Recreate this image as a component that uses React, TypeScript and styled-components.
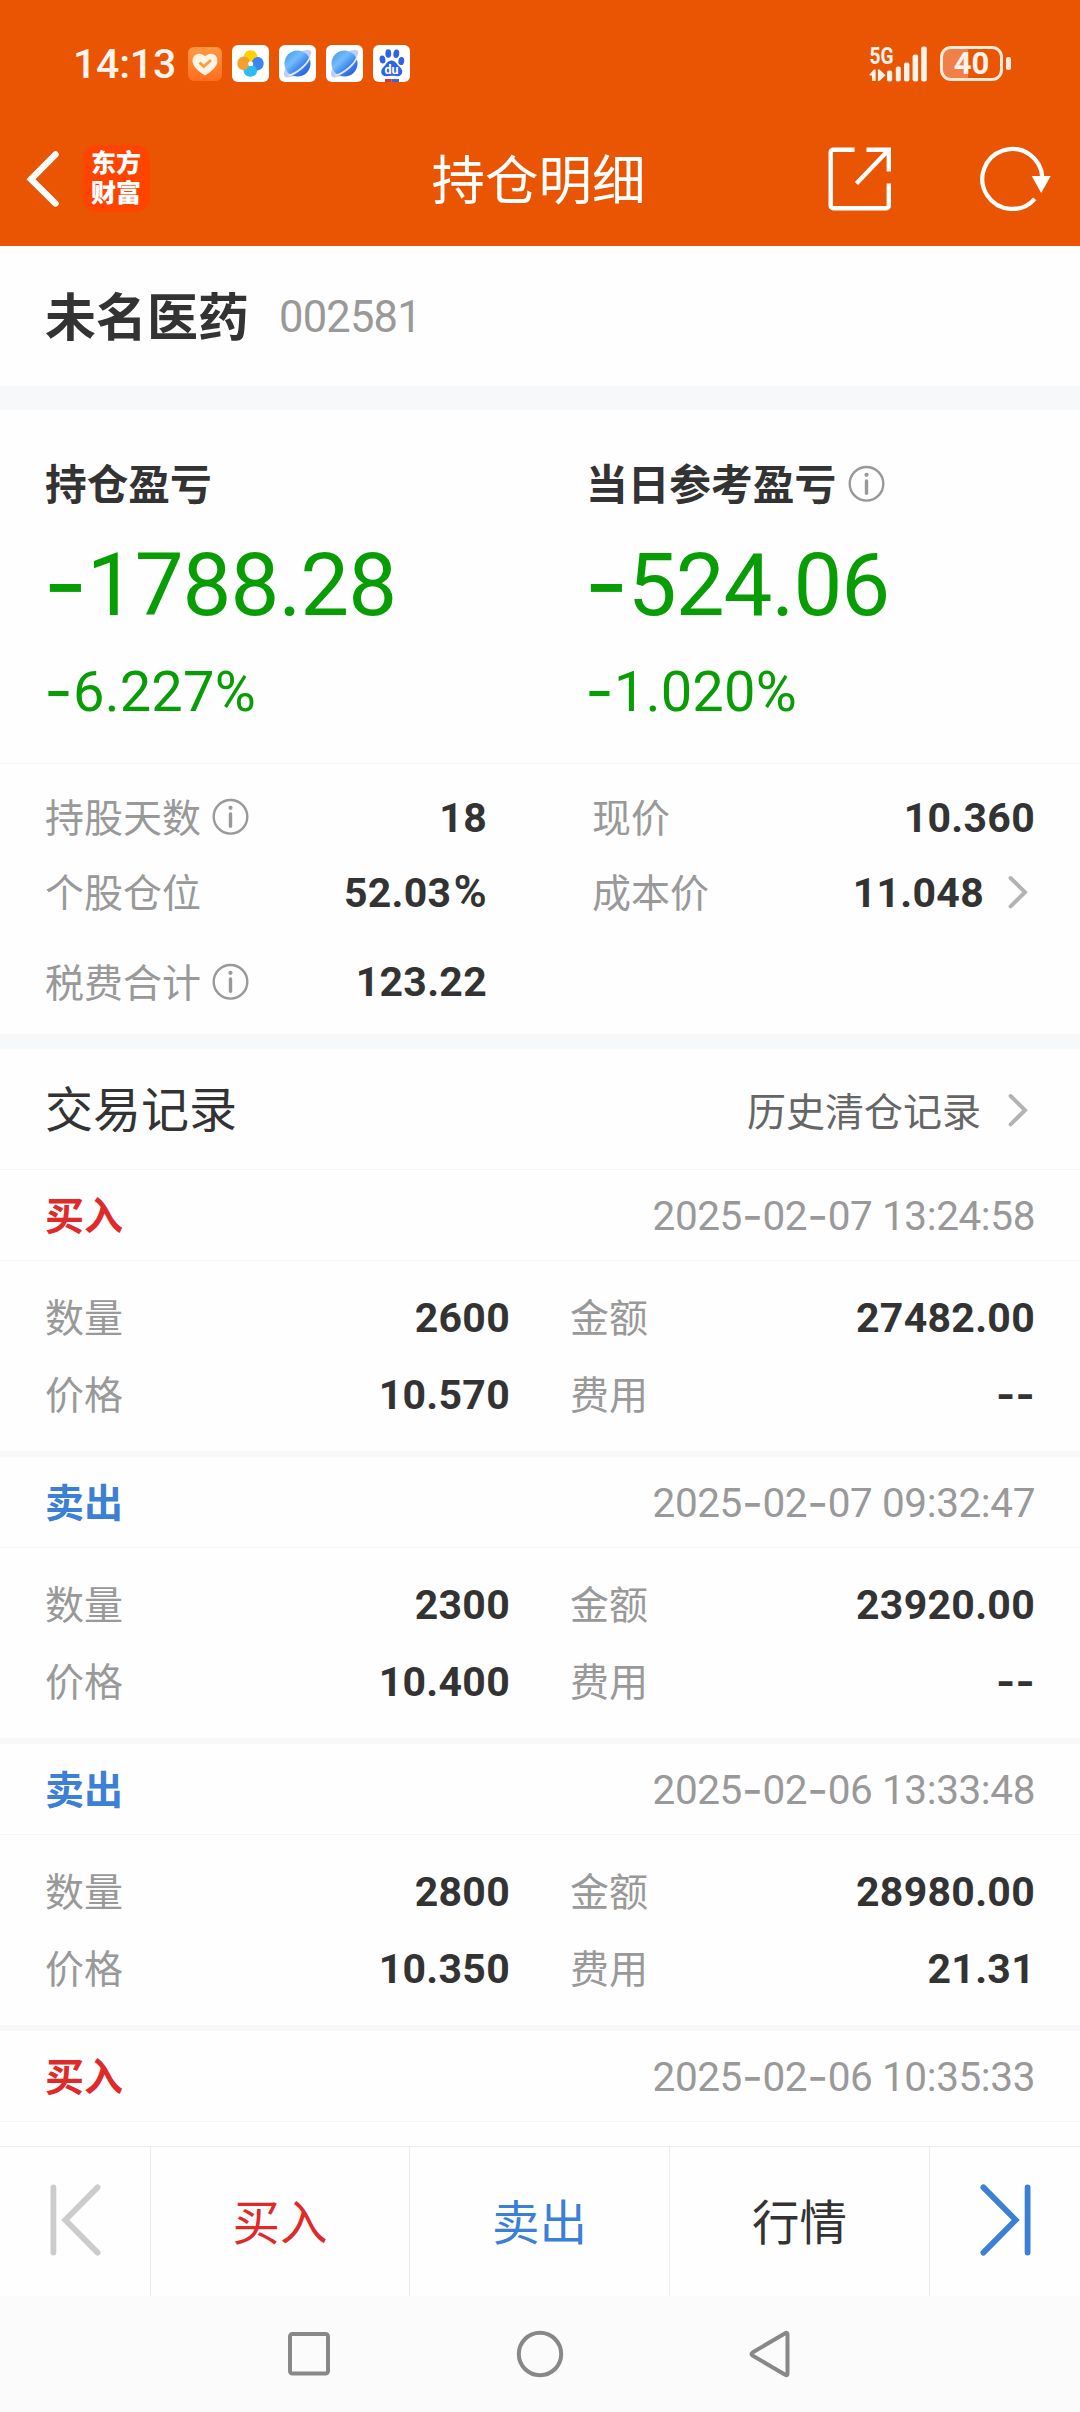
import React from "react";
import styled, { createGlobalStyle, css } from "styled-components";

const CJK = `"Noto Sans CJK SC", "Noto Sans", sans-serif`;
const DIGITS = `Roboto, "Noto Sans CJK SC", sans-serif`;

const color = {
  brand: "#ea5504",
  ink: "#333333",
  muted: "#999999",
  mid: "#666666",
  band: "#f6f8fa",
  line: "#f4f5f6",
  divider: "#ebebeb",
  down: "#089d05",
  buy: "#e02a2a",
  sell: "#3b80d6",
};

const GlobalStyle = createGlobalStyle`
  *, *::before, *::after { box-sizing: border-box; }
  html, body { margin: 0; padding: 0; background: #fff; }
  svg { display: block; flex: none; overflow: visible; }
`;

/* Ideographs sit slightly low in their line box; the bottom padding lifts them back to the centre. */
const cjkText = css`
  font-family: ${CJK};
  line-height: 1.3;
  padding-bottom: 0.11em;
  white-space: nowrap;
`;

const Screen = styled.div`
  width: 1080px;
  height: 2412px;
  display: flex;
  flex-direction: column;
  overflow: hidden;
  background: #fefefe;
  color: ${color.ink};
`;

const Header = styled.header`
  flex: none;
  height: 246px;
  background: ${color.brand};
  color: #fff;
`;

const StatusBar = styled.div`
  height: 127px;
  padding: 0 69px 0 73px;
  display: flex;
  align-items: center;
  justify-content: space-between;
`;

const StatusGroup = styled.div<{ $gap: number }>`
  display: flex;
  align-items: center;
  gap: ${(p) => p.$gap}px;
`;

const Clock = styled.span`
  width: 105px;
  font: 500 41px/44px ${DIGITS};
  letter-spacing: -0.2px;
  color: #fff4ec;
`;

const Battery = styled.div`
  display: flex;
  align-items: center;
  gap: 3px;
`;

const BatteryShell = styled.div<{ $level: number }>`
  width: 63px;
  height: 35px;
  border: 3px solid #ffeadb;
  border-radius: 11px;
  background: linear-gradient(
    to right,
    #f08048 ${(p) => p.$level}%,
    transparent ${(p) => p.$level}%
  );
  font: 700 31px/29px ${DIGITS};
  text-align: center;
  color: #fff4ec;
`;

const BatteryTip = styled.div`
  width: 5px;
  height: 13px;
  border-radius: 2px;
  background: #ffeadb;
`;

const NavBar = styled.div`
  height: 119px;
  padding: 0 29px 16px 26px;
  display: grid;
  grid-template-columns: 1fr auto 1fr;
  align-items: center;
`;

const NavLeft = styled.div`
  display: flex;
  align-items: center;
  gap: 24px;
`;

const NavRight = styled.div`
  display: flex;
  align-items: center;
  justify-content: flex-end;
  gap: 88px;
`;

const BrandBadge = styled.div`
  width: 67px;
  height: 67px;
  border-radius: 14px;
  background: #ff4400;
  padding: 1px 8px 0;
  font: 900 25px/30px ${CJK};
  word-break: break-all;
`;

const Title = styled.h1`
  ${cjkText}
  margin: 0;
  padding-bottom: 0.08em;
  font-size: 53.5px;
  font-weight: 400;
`;

const StockBar = styled.section`
  flex: none;
  height: 140px;
  padding: 1px 45px 0;
  display: flex;
  align-items: center;
  gap: 30px;
`;

const StockName = styled.h2`
  ${cjkText}
  margin: 0;
  font-size: 51px;
  font-weight: 700;
`;

const StockCode = styled.span`
  padding-top: 2px;
  font: 400 43.5px/50px ${DIGITS};
  letter-spacing: -0.8px;
  color: ${color.muted};
`;

const Band = styled.div<{ $h: number }>`
  flex: none;
  height: ${(p) => p.$h}px;
  background: ${color.band};
`;

const PnlSection = styled.section`
  flex: none;
  height: 354px;
  padding: 44px 45px 0;
  display: grid;
  grid-template-columns: 541px 1fr;
  border-bottom: 1px solid ${color.line};
`;

const PnlTitle = styled.div`
  height: 60px;
  display: flex;
  align-items: center;
  gap: 12px;
`;

const PnlLabel = styled.span`
  ${cjkText}
  font-size: 41.7px;
  font-weight: 700;
`;

const PnlAmount = styled.div`
  margin-top: 26px;
  margin-left: -2px;
  font: 400 87px/90px ${DIGITS};
  letter-spacing: -1px;
  color: ${color.down};
`;

const PnlPercent = styled.div`
  margin-top: 32px;
  margin-left: -1px;
  font: 400 56px/60px ${DIGITS};
  letter-spacing: 0.2px;
  color: ${color.down};
`;

const Stats = styled.section`
  flex: none;
  height: 270px;
  padding: 16px 45px 0;
  display: grid;
  grid-template-columns: 442px 443px;
  grid-template-rows: 75px 75px 104px;
  column-gap: 105px;
`;

const Field = styled.div`
  display: flex;
  align-items: center;
`;

const FieldLabel = styled.span`
  ${cjkText}
  font-size: 39px;
  color: ${color.muted};
`;

const FieldInfo = styled.span`
  margin-left: 11px;
`;

const FieldValue = styled.span`
  margin-left: auto;
  font: 700 41px/48px ${DIGITS};
  letter-spacing: 0.3px;
  white-space: nowrap;
`;

const PercentSign = styled.span`
  margin-left: 2px;
  font-size: 1.1em;
  font-weight: 600;
  line-height: 0;
  vertical-align: -0.02em;
`;

const ChevronSlot = styled.span<{ $gap: number }>`
  margin: 0 7px 0 ${(p) => p.$gap}px;
`;

const RecordsHeader = styled.div`
  flex: none;
  height: 121px;
  padding: 0 45px;
  display: flex;
  align-items: center;
  justify-content: space-between;
  border-bottom: 1px solid ${color.line};
`;

const RecordsTitle = styled.h3`
  ${cjkText}
  margin: 0;
  font-size: 48px;
  font-weight: 400;
`;

const HistoryLink = styled.div`
  display: flex;
  align-items: center;
  padding-top: 4px;
`;

const HistoryText = styled.span`
  ${cjkText}
  font-size: 39px;
  color: ${color.mid};
`;

const RecordList = styled.main`
  flex: 1;
  min-height: 0;
  overflow: hidden;
`;

const Record = styled.article`
  height: 287px;
  border-bottom: 6px solid ${color.band};
`;

const RecordHead = styled.div`
  height: 91px;
  padding: 0 45px;
  display: flex;
  align-items: center;
  justify-content: space-between;
  border-bottom: 1px solid ${color.line};
`;

const Side = styled.span<{ $buy: boolean }>`
  ${cjkText}
  font-size: 39px;
  font-weight: 700;
  color: ${(p) => (p.$buy ? color.buy : color.sell)};
`;

const Stamp = styled.time`
  padding-top: 1px;
  font: 400 40.5px/48px ${DIGITS};
  letter-spacing: -0.4px;
  color: ${color.muted};
  white-space: nowrap;
`;

const RecordBody = styled.div`
  padding: 18px 45px 0;
  display: grid;
  grid-template-columns: 465px 465px;
  grid-template-rows: 77px 77px;
  column-gap: 60px;
`;

const ActionBar = styled.nav`
  flex: none;
  height: 150px;
  display: grid;
  grid-template-columns: 151px 259px 260px 260px 150px;
  border-top: 1px solid ${color.divider};
  background: #fefefe;
`;

const Action = styled.button<{ $color?: string }>`
  ${cjkText}
  display: flex;
  align-items: center;
  justify-content: center;
  margin: 0;
  padding-bottom: 4px;
  border: 0;
  border-right: 1px solid ${color.divider};
  background: none;
  font-size: 47.5px;
  color: ${(p) => p.$color ?? color.ink};
  &:last-child {
    border-right: 0;
  }
`;

const SystemNav = styled.footer`
  flex: none;
  height: 116px;
  display: flex;
  align-items: center;
  justify-content: center;
  gap: 185px;
  background: #fbfbfb;
`;

const Dash = styled.span`
  font-family: Inter, sans-serif;
  font-size: 1.12em;
  line-height: 0;
  vertical-align: -0.035em;

  ${FieldValue} & {
    font-size: 1em;
    vertical-align: -0.01em;
  }
`;

/* Figures use Roboto, whose hyphen is short; minus signs and date dashes take the wider Inter one. */
function Figure({ text }: { text: string }) {
  return (
    <>
      {text.split(/(-)/).map((part, i) =>
        part === "-" ? <Dash key={i}>-</Dash> : <React.Fragment key={i}>{part}</React.Fragment>
      )}
    </>
  );
}

const InfoIcon = () => (
  <svg width="37" height="37" viewBox="0 0 37 37" fill="none" stroke={color.muted}>
    <circle cx="18.5" cy="17.8" r="16.8" strokeWidth="2.4" />
    <circle cx="18.5" cy="8.8" r="2.1" fill={color.muted} stroke="none" />
    <path d="M18.5 15V27.3" strokeWidth="3.4" strokeLinecap="round" />
  </svg>
);

const Chevron = () => (
  <svg width="20" height="34" viewBox="0 0 20 34" fill="none">
    <path d="M2.6 2 17 16.2 2.6 30.4" stroke="#b3b3b3" strokeWidth="4" strokeLinecap="round" />
  </svg>
);

const BackIcon = () => (
  <svg width="33" height="56" viewBox="0 0 33 56" fill="none" stroke="#fff">
    <path d="M29.5 3.5 5 28.2 29.5 52.5" strokeWidth="6.4" strokeLinecap="round" />
  </svg>
);

const ShareIcon = () => (
  <svg width="64" height="64" viewBox="0 0 64 64" fill="none" stroke="#fff" strokeWidth="4.4">
    <path d="M26.5 2.7H5.2a2.5 2.5 0 0 0-2.5 2.5v53.6a2.5 2.5 0 0 0 2.5 2.5H58.3a2.5 2.5 0 0 0 2.5-2.5V36.5" />
    <path d="M38.5 2.7H60.8V24.5M60.3 3.3 28.5 36.5" />
  </svg>
);

const RefreshIcon = () => (
  <svg width="71" height="66" viewBox="0 0 71 66" fill="none">
    <path d="M62.3 31.5A30 30 0 1 0 54.8 52.8" stroke="#fff" strokeWidth="4.2" />
    <path d="M51.7 30H70.7L61.2 47Z" fill="#fff" />
  </svg>
);

const HealthIcon = () => (
  <svg width="34" height="34" viewBox="0 0 34 34">
    <defs>
      <linearGradient id="health" x1="0" y1="0" x2="0" y2="1">
        <stop offset="0" stopColor="#ff9a45" />
        <stop offset="1" stopColor="#ff6c1f" />
      </linearGradient>
    </defs>
    <rect width="34" height="34" rx="6" fill="url(#health)" />
    <path d="M17 28.5C11 25 4.5 19.5 4.5 13.5 4.5 6.5 13 4.5 17 9.5 21 4.5 29.5 6.5 29.5 13.5 29.5 19.5 23 25 17 28.5Z" fill="#fff3e2" />
    <path d="M11.5 15.5 15.8 19.5 23 13" fill="none" stroke="#f2a04c" strokeWidth="2.9" />
  </svg>
);

const PETAL = "M18.5 18.5C12.5 15.5 10.5 11.5 13 8 16 3.8 24 4.5 25.3 10.5 26.2 14 24 17 20.5 17.5Z";

const PinwheelIcon = () => (
  <svg width="37" height="37" viewBox="0 0 37 37">
    <rect width="37" height="37" rx="6" fill="#fff" />
    {["#ffd006", "#3d84f2", "#2cbcf5", "#f5a02c"].map((fill, i) => (
      <path key={fill} d={PETAL} fill={fill} transform={`rotate(${i * 90} 18.5 18.5)`} />
    ))}
    <circle cx="18.7" cy="18.7" r="2.5" fill="#fff" />
  </svg>
);

const PlanetIcon = ({ id }: { id: string }) => (
  <svg width="37" height="37" viewBox="0 0 37 37">
    <defs>
      <linearGradient id={id} x1="0.1" y1="0.1" x2="0.85" y2="0.9">
        <stop offset="0" stopColor="#4a9df0" />
        <stop offset="0.35" stopColor="#74bdfb" />
        <stop offset="0.65" stopColor="#4189ee" />
        <stop offset="1" stopColor="#2c60dc" />
      </linearGradient>
    </defs>
    <rect width="37" height="37" rx="6" fill="#fff" />
    <path d="M23 6C29 4.5 33.5 4 32 9L29.5 15ZM6.5 23C4 29 4.5 33 9 32.5L15 31Z" fill="#bfcff9" />
    <circle cx="18.5" cy="18.5" r="13" fill={`url(#${id})`} />
    <path d="M31 12C29 18.5 19 28 9.5 30.5" fill="none" stroke="#dbe8ff" strokeWidth="1.8" />
  </svg>
);

const PawIcon = () => (
  <svg width="37" height="37" viewBox="0 0 37 37">
    <rect width="37" height="37" rx="6" fill="#fff" />
    <g fill="#2f62e6">
      <ellipse cx="9.5" cy="14.5" rx="2.9" ry="4.1" transform="rotate(-10 9.5 14.5)" />
      <ellipse cx="15.3" cy="8.5" rx="2.9" ry="4.3" />
      <ellipse cx="23.3" cy="8.7" rx="2.9" ry="4.3" transform="rotate(8 23.3 8.7)" />
      <ellipse cx="28.3" cy="16" rx="2.9" ry="4.1" transform="rotate(8 28.3 16)" />
      <path d="M18.5 15.5C23 15.5 23.5 19.5 26.5 21.8 31.5 26 29 31.5 24.5 31.2 20 30.5 18 30.5 13.5 31.2 8 31.5 6.5 26 10.5 22 13.5 19.5 14 15.5 18.5 15.5Z" />
    </g>
    <text x="18.6" y="29" textAnchor="middle" fontFamily="Roboto, sans-serif" fontWeight="700" fontSize="12.5" fill="#fff">du</text>
    <path d="M12 34H18.7V37H12Z" fill="#e0323c" />
    <path d="M18.7 34H26V37H18.7Z" fill="#3f66e0" />
  </svg>
);

const SignalIcon = () => (
  <svg width="58" height="36" viewBox="0 0 58 36" fill="#fff4ec">
    <text x="0.5" y="17.5" fontFamily="Roboto, sans-serif" fontWeight="700" fontSize="24" textLength="24" lengthAdjust="spacingAndGlyphs">5G</text>
    <path d="M0 29 5 23.5 6.6 23.5V35H3V29.8ZM8.9 35H10.5L16.5 29.2 10.5 23.5H8.9Z" />
    <rect x="18" y="24.5" width="5.2" height="11" rx="2" />
    <rect x="26.8" y="20.5" width="5" height="15" rx="2" />
    <rect x="35" y="16.5" width="5.4" height="19" rx="2" />
    <rect x="43.6" y="8.5" width="5.5" height="27" rx="2" />
    <rect x="52.2" y="0.5" width="5.6" height="35" rx="2" />
  </svg>
);

const EdgeIcon = ({ stroke, flip }: { stroke: string; flip?: boolean }) => (
  <svg width="51" height="72" viewBox="0 0 51 72" fill="none" stroke={stroke} strokeWidth="5.8" strokeLinecap="round">
    <g transform={flip ? "matrix(-1 0 0 1 51 0)" : undefined}>
      <path d="M3.4 3.4V68.6M47.6 3.4 15.3 36 47.6 68.6" />
    </g>
  </svg>
);

type FieldProps = { label: string; value: string; info?: boolean; chevron?: boolean };

function FieldRow({ label, value, info, chevron }: FieldProps) {
  const percent = value.endsWith("%");
  return (
    <Field>
      <FieldLabel>{label}</FieldLabel>
      {info && (
        <FieldInfo>
          <InfoIcon />
        </FieldInfo>
      )}
      <FieldValue>
        <Figure text={percent ? value.slice(0, -1) : value} />
        {percent && <PercentSign>%</PercentSign>}
      </FieldValue>
      {chevron && (
        <ChevronSlot $gap={24}>
          <Chevron />
        </ChevronSlot>
      )}
    </Field>
  );
}

const pnl = [
  { label: "持仓盈亏", amount: "-1788.28", percent: "-6.227%", info: false },
  { label: "当日参考盈亏", amount: "-524.06", percent: "-1.020%", info: true },
];

const stats: FieldProps[] = [
  { label: "持股天数", value: "18", info: true },
  { label: "现价", value: "10.360" },
  { label: "个股仓位", value: "52.03%" },
  { label: "成本价", value: "11.048", chevron: true },
  { label: "税费合计", value: "123.22", info: true },
];

const records = [
  { side: "买入", time: "2025-02-07 13:24:58", qty: "2600", amount: "27482.00", price: "10.570", fee: "--" },
  { side: "卖出", time: "2025-02-07 09:32:47", qty: "2300", amount: "23920.00", price: "10.400", fee: "--" },
  { side: "卖出", time: "2025-02-06 13:33:48", qty: "2800", amount: "28980.00", price: "10.350", fee: "21.31" },
  { side: "买入", time: "2025-02-06 10:35:33" },
];

export default function App() {
  return (
    <Screen>
      <GlobalStyle />
      <Header>
        <StatusBar>
          <StatusGroup $gap={10}>
            <Clock>14:13</Clock>
            <HealthIcon />
            <PinwheelIcon />
            <PlanetIcon id="planet-a" />
            <PlanetIcon id="planet-b" />
            <PawIcon />
          </StatusGroup>
          <StatusGroup $gap={13}>
            <SignalIcon />
            <Battery>
              <BatteryShell $level={43}>40</BatteryShell>
              <BatteryTip />
            </Battery>
          </StatusGroup>
        </StatusBar>
        <NavBar>
          <NavLeft>
            <BackIcon />
            <BrandBadge>东方财富</BrandBadge>
          </NavLeft>
          <Title>持仓明细</Title>
          <NavRight>
            <ShareIcon />
            <RefreshIcon />
          </NavRight>
        </NavBar>
      </Header>

      <StockBar>
        <StockName>未名医药</StockName>
        <StockCode>002581</StockCode>
      </StockBar>
      <Band $h={24} />

      <PnlSection>
        {pnl.map((p) => (
          <div key={p.label}>
            <PnlTitle>
              <PnlLabel>{p.label}</PnlLabel>
              {p.info && <InfoIcon />}
            </PnlTitle>
            <PnlAmount>
              <Figure text={p.amount} />
            </PnlAmount>
            <PnlPercent>
              <Figure text={p.percent} />
            </PnlPercent>
          </div>
        ))}
      </PnlSection>

      <Stats>
        {stats.map((s) => (
          <FieldRow key={s.label} {...s} />
        ))}
      </Stats>
      <Band $h={15} />

      <RecordsHeader>
        <RecordsTitle>交易记录</RecordsTitle>
        <HistoryLink>
          <HistoryText>历史清仓记录</HistoryText>
          <ChevronSlot $gap={27}>
            <Chevron />
          </ChevronSlot>
        </HistoryLink>
      </RecordsHeader>

      <RecordList>
        {records.map((r) => (
          <Record key={r.time}>
            <RecordHead>
              <Side $buy={r.side === "买入"}>{r.side}</Side>
              <Stamp>
                <Figure text={r.time} />
              </Stamp>
            </RecordHead>
            {r.qty && (
              <RecordBody>
                <FieldRow label="数量" value={r.qty} />
                <FieldRow label="金额" value={r.amount!} />
                <FieldRow label="价格" value={r.price!} />
                <FieldRow label="费用" value={r.fee!} />
              </RecordBody>
            )}
          </Record>
        ))}
      </RecordList>

      <ActionBar>
        <Action aria-label="上一只">
          <EdgeIcon stroke="#cccccc" />
        </Action>
        <Action $color={color.buy}>买入</Action>
        <Action $color={color.sell}>卖出</Action>
        <Action>行情</Action>
        <Action aria-label="下一只">
          <EdgeIcon stroke={color.sell} flip />
        </Action>
      </ActionBar>

      <SystemNav>
        <svg width="44" height="44" viewBox="0 0 44 44" fill="none" stroke="#888" strokeWidth="4">
          <rect x="3" y="2" width="38" height="39.5" rx="2.5" />
        </svg>
        <svg width="48" height="48" viewBox="0 0 48 48" fill="none" stroke="#888" strokeWidth="4">
          <circle cx="24" cy="24" r="21.2" />
        </svg>
        <svg width="44" height="48" viewBox="0 0 44 48" fill="none" stroke="#888" strokeWidth="4" strokeLinejoin="round">
          <path d="M38.5 4.5Q38.5 2 36.2 3.2L3.5 22.5Q1.5 24 3.5 25.5L36.2 44.8Q38.5 46 38.5 43.5Z" />
        </svg>
      </SystemNav>
    </Screen>
  );
}
